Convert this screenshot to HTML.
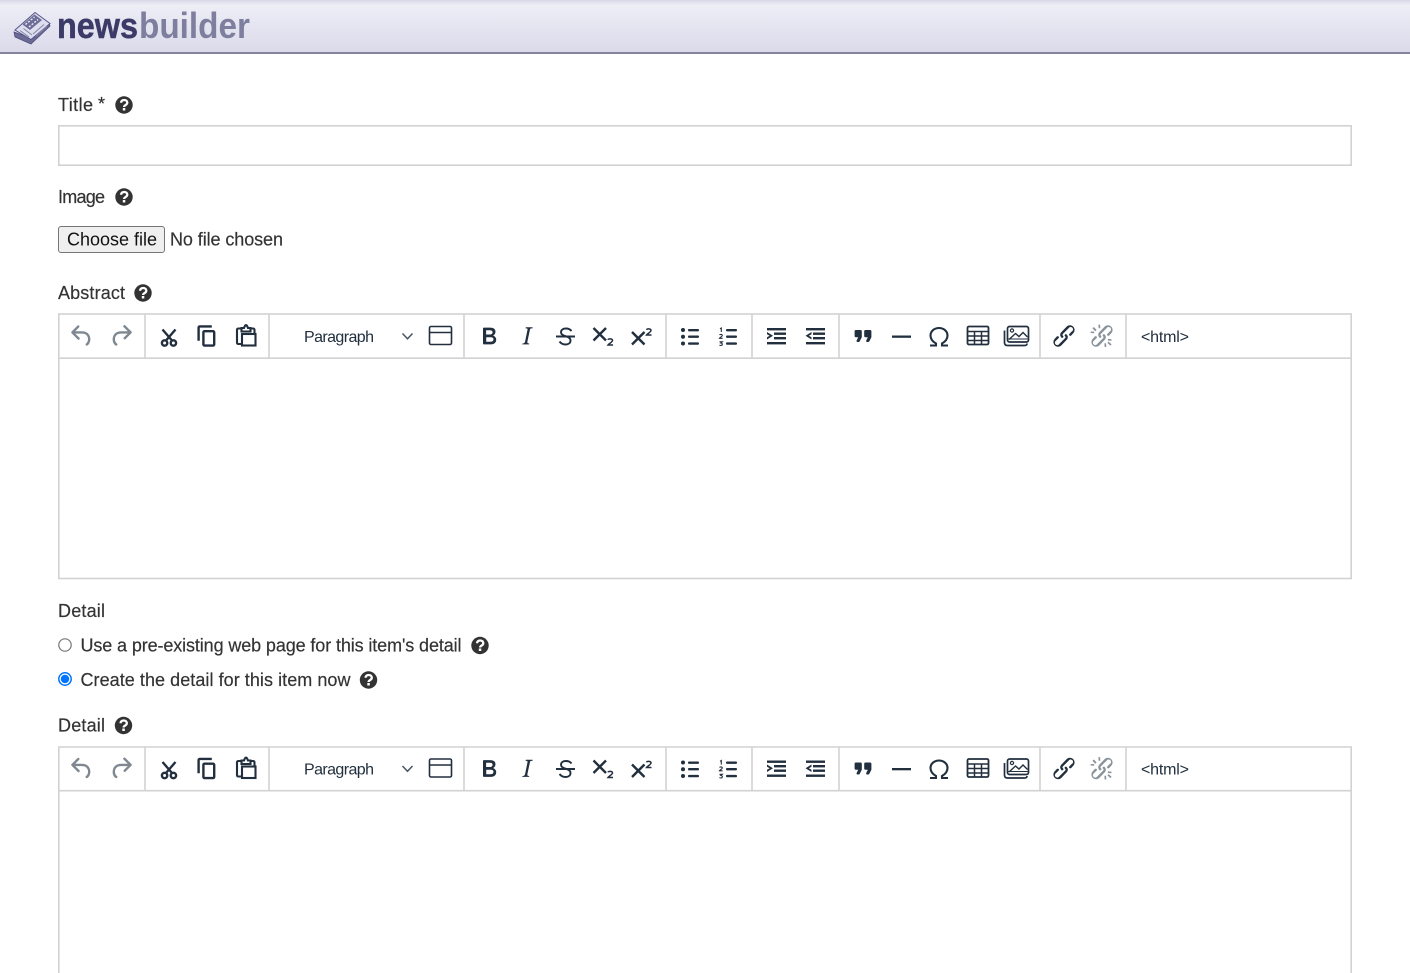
<!DOCTYPE html>
<html lang="en"><head><meta charset="utf-8"><title>newsbuilder</title>
<style>
html,body{margin:0;padding:0;background:#fff;width:1410px;height:973px;overflow:hidden}
svg{display:block;font-family:"Liberation Sans",sans-serif}
.l{font-size:18px;fill:#333;stroke:#333;stroke-width:.18}
.t{font-size:16px;fill:#222f3e}
.b{fill:none;stroke:#d2d2d2;stroke-width:1.6}
.i{fill:#222f3e}
</style></head><body>
<svg width="1410" height="973" viewBox="0 0 1410 973" xmlns="http://www.w3.org/2000/svg">
<defs>
<linearGradient id="h" x1="0" y1="0" x2="0" y2="1"><stop offset="0" stop-color="#d9d8e8"/><stop offset=".1" stop-color="#eeeef7"/><stop offset="1" stop-color="#dadaea"/></linearGradient>
<g id="q"><circle r="8.700" fill="#333"/><path d="M-3-2.200C-2.800-4.200-1.400-5 .2-5 2-5 3.300-3.800 3.300-2.300 3.300.1.100 0 .1 2" fill="none" stroke="#fff" stroke-width="2.300"/><rect x="-1.200" y="3" width="2.500" height="2.500" fill="#fff"/></g>
<g id="tb">
<g stroke="#d2d2d2" stroke-width="1.600"><path d="M145 314V358M269 314V358M464 314V358M666 314V358M752 314V358M839 314V358M1040 314V358M1126 314V358"/></g>
<!-- undo / redo -->
<g transform="translate(67.600 321.600) scale(1.200)" fill="#7f8891"><path d="M6.400 8H12c3.700 0 6.200 2 6.800 5.100.6 2.700-.4 5.600-2.300 6.800a1 1 0 0 1-1-1.800c1.100-.6 1.800-2.700 1.400-4.600-.5-2.100-2.100-3.500-4.900-3.500H6.400l3.300 3.300a1 1 0 1 1-1.400 1.400l-5-5a1 1 0 0 1 0-1.400l5-5a1 1 0 0 1 1.400 1.400L6.400 8z"/></g>
<g transform="translate(106.600 321.600) scale(1.200)" fill="#7f8891"><path d="M17.600 10H12c-2.800 0-4.400 1.400-4.900 3.500-.4 2 .3 4 1.400 4.600a1 1 0 1 1-1 1.800c-2-1.200-2.900-4.100-2.300-6.800.6-3 3-5.100 6.800-5.100h5.600l-3.300-3.300a1 1 0 1 1 1.400-1.400l5 5a1 1 0 0 1 0 1.400l-5 5a1 1 0 0 1-1.400-1.400l3.300-3.300z"/></g>
<!-- cut -->
<g fill="none" stroke="#222f3e" stroke-width="2.400"><path d="M162.500 329.500 172 340.500M175.500 329.500 166 340.500"/><circle cx="164.600" cy="343" r="2.700"/><circle cx="173.400" cy="343" r="2.700"/></g>
<!-- copy -->
<g transform="translate(192.600 321.600) scale(1.200)" class="i"><path d="M16 3H6a2 2 0 0 0-2 2v11h2V5h10V3zm1 4a2 2 0 0 1 2 2v10a2 2 0 0 1-2 2h-7a2 2 0 0 1-2-2V9c0-1.200.9-2 2-2h7zm0 12V9h-7v10h7z"/></g>
<!-- paste -->
<g fill="none" stroke="#222f3e" stroke-width="2.100"><path d="M241.500 344H238.500Q237 344 237 342.500V330Q237 328.500 238.500 328.500H253Q254.500 328.500 254.500 330V334"/><rect x="242" y="334" width="13.500" height="11.500"/><path d="M241.500 331.500V328H244Q245 325 246 325T248 328H250.500V331.500Z" fill="#fff"/></g>
<!-- chevron + window -->
<path d="M402.500 333.500 407.500 338.800 412.500 333.500" fill="none" stroke="#4a5562" stroke-width="1.500"/>
<g fill="none" stroke="#222f3e" stroke-width="1.600"><rect x="429.500" y="326.500" width="22" height="18" rx="1.500"/><path d="M429.500 332.500H451.500"/></g>
<!-- bold, italic, strike -->
<g transform="translate(474.600 321.600) scale(1.200)" class="i"><path d="M7.800 19c-.3 0-.5 0-.6-.2l-.2-.5V5.700c0-.2 0-.4.2-.5l.6-.2h5c1.500 0 2.700.3 3.500 1 .7.6 1.100 1.400 1.100 2.500a3 3 0 0 1-.6 1.900c-.4.6-1 1-1.600 1.200.4.1.9.3 1.300.6s.8.700 1 1.200c.4.400.5 1 .5 1.600 0 1.300-.4 2.300-1.300 3-.8.700-2.100 1-3.800 1H7.800zm5-8.300c.6 0 1.200-.1 1.600-.5.4-.3.6-.7.6-1.300 0-1.100-.8-1.700-2.400-1.700h-3v3.500h3.100zm.6 6c.7 0 1.300-.1 1.700-.4.4-.4.6-.9.6-1.500s-.2-1-.7-1.400c-.4-.3-1-.4-2-.4H9.700v3.800h3.700z"/></g>
<g transform="translate(512.600 321.600) scale(1.200)" class="i"><path d="M16.700 4.700l-.1.9h-.3c-.6 0-1 0-1.400.3-.3.3-.4.6-.5 1.100l-2.100 9.800v.6c0 .5.4.8 1.400.8h.2l-.2.8H8l.2-.8h.2c1.100 0 1.800-.5 2-1.500l2-9.800.1-.5c0-.6-.4-.8-1.400-.8h-.3l.2-.9h5.800z"/></g>
<g fill="none" stroke="#222f3e" stroke-width="1.900"><path d="M556 336.500H575"/><path d="M571.500 331C570 329 568 328.500 566 328.500 563 328.500 561 330 561 332.300 561 335 564 335.800 566 336.300 568.500 337 570.500 338 570.500 340.500 570.500 343 568.500 344.500 565.500 344.500 563 344.500 561 343.500 559.500 341.500"/></g>
<!-- sub / sup -->
<g fill="none" stroke="#222f3e" stroke-width="2.400"><path d="M593.500 328 606 340.500M606 328 593.500 340.500"/><path d="M632 332 644.500 344.500M644.500 332 632 344.500"/></g>
<g fill="none" stroke="#222f3e" stroke-width="1.500"><path d="M608 339.800C608.300 338.500 612.600 338.300 612.500 340.500 612.400 342 608.800 343.800 608 345H613"/><path d="M646.500 329.800C646.800 328.500 651.100 328.300 651 330.500 650.900 332 647.300 333.800 646.500 335H651.500"/></g>
<!-- bullist -->
<g class="i"><circle cx="683" cy="330" r="2"/><circle cx="683" cy="336.700" r="2"/><circle cx="683" cy="343.500" r="2"/><rect x="688" y="329" width="11" height="2.400" rx="1"/><rect x="688" y="335.500" width="11" height="2.400" rx="1"/><rect x="688" y="342.400" width="11" height="2.400" rx="1"/></g>
<!-- numlist -->
<g class="i"><rect x="726" y="329" width="11" height="2.400" rx="1"/><rect x="726" y="335.500" width="11" height="2.400" rx="1"/><rect x="726" y="342.400" width="11" height="2.400" rx="1"/></g>
<g fill="none" stroke="#222f3e" stroke-width="1.100"><path d="M720 328.800 721.300 328V332M719.500 335C720 334.200 722.300 334.200 722.300 335.500 722.300 336.500 720 337.300 719.500 338.300H722.600M719.500 341.800H722.300L720.900 343C722.800 343 722.800 345.500 720.900 345.500 720.400 345.500 720 345.500 719.500 345"/></g>
<!-- indent / outdent -->
<g class="i"><rect x="767" y="328" width="19" height="2.400"/><rect x="774" y="332.500" width="12" height="2.400"/><rect x="774" y="337" width="12" height="2.400"/><rect x="767" y="342" width="19" height="2.400"/><path d="M767 332 773 335.800 767 339.500V337.300L769.700 335.800 767 334.200Z"/>
<rect x="806" y="328" width="19" height="2.400"/><rect x="813" y="332.500" width="12" height="2.400"/><rect x="813" y="337" width="12" height="2.400"/><rect x="806" y="342" width="19" height="2.400"/><path d="M811.500 332 805.500 335.800 811.500 339.500V337.300L808.800 335.800 811.500 334.200Z"/></g>
<!-- quote, hr -->
<g transform="translate(848.600 321.600) scale(1.200)" class="i"><path d="M7.500 17h.9c.4 0 .7-.2.9-.6L11 13V8c0-.6-.4-1-1-1H6a1 1 0 0 0-1 1v4c0 .6.4 1 1 1h2l-1.300 2.700a1 1 0 0 0 .8 1.300zm8 0h.9c.4 0 .7-.2.9-.6L19 13V8c0-.6-.4-1-1-1h-4a1 1 0 0 0-1 1v4c0 .6.4 1 1 1h2l-1.300 2.700a1 1 0 0 0 .8 1.300z"/></g>
<rect x="892" y="335.500" width="19" height="2.300" class="i"/>
<!-- omega -->
<path d="M930 345.500H936V343.500C932.500 341.500 930.500 339 930.500 335.500 930.500 331 934.500 328 939 328S947.500 331 947.500 335.500C947.500 339 945.500 341.500 942 343.500V345.500H948" fill="none" stroke="#222f3e" stroke-width="2.100"/>
<!-- table -->
<g fill="none" stroke="#222f3e" stroke-width="1.800"><rect x="967.500" y="326.500" width="21" height="18" rx="1.500"/><path d="M967.500 331.500H988.500M967.500 336H988.500M967.500 340.500H988.500M974.500 331.500V344.500M981.500 331.500V344.500" stroke-width="1.500"/></g>
<!-- image -->
<g fill="none" stroke="#222f3e" stroke-width="1.700"><path d="M1004.500 330.500V342.500Q1004.500 345.500 1007.500 345.500H1024.500Q1027 345.500 1027 343.500"/><rect x="1007.500" y="326.500" width="21" height="15.500" rx="2"/><circle cx="1012" cy="330.500" r="1.600" stroke-width="1.200"/><path d="M1009 339.500 1015.500 333.500 1019 336.500 1023 332.500 1027.500 337" stroke-width="1.400"/><path d="M1007.500 339H1028" stroke-width="1.100"/></g>
<!-- link -->
<g transform="translate(1049.600 321.600) scale(1.200)" class="i"><path d="M6.200 12.300a1 1 0 0 1 1.400 1.400l-2.100 2.100a2 2 0 1 0 2.700 2.700l4.800-4.800a1 1 0 0 0 0-1.400 1 1 0 1 1 1.400-1.300 2.900 2.900 0 0 1 0 4L9.600 20a3.900 3.900 0 0 1-5.500-5.500l2-2.200zm11.600-.6a1 1 0 0 1-1.400-1.400l2-2a2 2 0 1 0-2.600-2.800L11 10.300a1 1 0 0 0 0 1.400A1 1 0 1 1 9.600 13a2.900 2.900 0 0 1 0-4L14.400 4a3.900 3.900 0 0 1 5.500 5.500l-2 2.200z"/></g>
<!-- unlink -->
<g transform="translate(1087.600 321.600) scale(1.200)" fill="#8a939b"><path d="M6.200 12.300a1 1 0 0 1 1.400 1.400l-2.100 2.100a2 2 0 1 0 2.700 2.700l4.800-4.800a1 1 0 0 0 0-1.400 1 1 0 1 1 1.400-1.300 2.900 2.900 0 0 1 0 4L9.600 20a3.900 3.900 0 0 1-5.500-5.500l2-2.200zm11.600-.6a1 1 0 0 1-1.400-1.400l2-2a2 2 0 1 0-2.600-2.800L11 10.300a1 1 0 0 0 0 1.400A1 1 0 1 1 9.600 13a2.900 2.900 0 0 1 0-4L14.400 4a3.900 3.900 0 0 1 5.500 5.500l-2 2.200z"/><path d="M4 5.500 5.300 4.500 7.500 7 6.300 8zM9 2.500h1.400l.2 3H9.200zM2.500 9.500V8.200l3 .2v1.300zM20 14.700l-.2 1.300-3-.3.2-1.300zM20 19l-1 1-2.500-2.300 1-1zM14 18h1.400l.2 3.200h-1.400z"/></g>
</g>
</defs>

<rect width="1410" height="52" fill="url(#h)"/>
<rect y="52" width="1410" height="2" fill="#85839d"/>
<!-- logo -->
<g>
<path d="M14 32 15 37 31 44 50 26 49 23 31 38Z" fill="#6a6a94" stroke="#4f4f7e" stroke-width=".8"/>
<path d="M15 30 35 12.500 50 23.500 31 39.500Z" fill="#dedfee" stroke="#55558a" stroke-width="1"/>
<path d="M22.500 24.500 34.500 14.500 42 20 30 30Z" fill="#6c6c98"/>
<path d="M25.500 24.500 34.500 17M29 27 38 19.500" stroke="#eeeef6" stroke-width="1.400" stroke-dasharray="2 1.500" fill="none"/>
<path d="M20 30.500 29 37M23.500 28.500 32 35M33 34 44 24.500M36 36 47 26" stroke="#8585a8" stroke-width="1" fill="none"/>
<text x="57" y="38" font-size="36.500" font-weight="700" fill="#3c3b68" stroke="#3c3b68" stroke-width=".5" textLength="81" lengthAdjust="spacingAndGlyphs">news</text>
<text x="139" y="38" font-size="36.500" font-weight="700" fill="#7e7e9e" textLength="111" lengthAdjust="spacingAndGlyphs">builder</text>
</g>

<!-- Title -->
<text class="l" x="58" y="111" textLength="35">Title</text>
<text class="l" x="98" y="110" textLength="7">*</text>
<use href="#q" transform="translate(124 105)"/>
<rect class="b" x="58.800" y="125.800" width="1292.400" height="39.400"/>

<!-- Image -->
<text class="l" x="58" y="203" textLength="47">Image</text>
<use href="#q" transform="translate(124 197)"/>
<rect x="58.500" y="226.500" width="106" height="26" rx="2.500" fill="#efefef" stroke="#767676"/>
<text x="67" y="245.500" font-size="18" fill="#111" textLength="90">Choose file</text>
<text class="l" x="170" y="245.500" textLength="113">No file chosen</text>

<!-- Abstract -->
<text class="l" x="58" y="299" textLength="67">Abstract</text>
<use href="#q" transform="translate(143 293)"/>
<rect class="b" x="58.800" y="314" width="1292.400" height="264.500"/>
<path d="M59 358.200H1351" stroke="#d2d2d2" stroke-width="1.600"/>
<use href="#tb"/>
<text class="t" x="304" y="342" textLength="70">Paragraph</text>
<text class="t" x="1141" y="342" textLength="48">&lt;html&gt;</text>

<!-- Detail radios -->
<text class="l" x="58" y="617" textLength="47">Detail</text>
<circle cx="65" cy="645" r="6.200" fill="#fff" stroke="#767676" stroke-width="1.200"/>
<text class="l" x="80.500" y="651.500" textLength="381">Use a pre-existing web page for this item's detail</text>
<use href="#q" transform="translate(480 645.500)"/>
<circle cx="65" cy="679" r="6.200" fill="#fff" stroke="#0075ff" stroke-width="1.500"/>
<circle cx="65" cy="679" r="4.200" fill="#0075ff"/>
<text class="l" x="80.500" y="686" textLength="270">Create the detail for this item now</text>
<use href="#q" transform="translate(368.500 680)"/>

<!-- Detail editor -->
<text class="l" x="58" y="731.500" textLength="47">Detail</text>
<use href="#q" transform="translate(123.500 725.500)"/>
<path class="b" d="M58.800 980V747H1351.200V980"/>
<path d="M59 790.700H1351" stroke="#d2d2d2" stroke-width="1.600"/>
<use href="#tb" transform="translate(0 432.500)"/>
<text class="t" x="304" y="774.500" textLength="70">Paragraph</text>
<text class="t" x="1141" y="774.500" textLength="48">&lt;html&gt;</text>
</svg>
</body></html>
